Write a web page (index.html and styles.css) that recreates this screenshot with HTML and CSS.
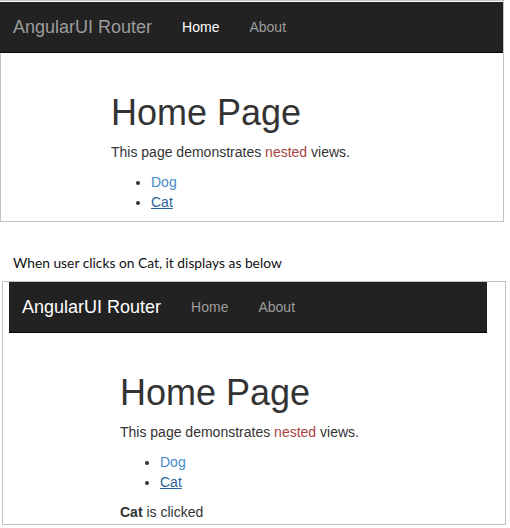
FILE: index.html
```html
<!DOCTYPE html>
<html>
<head>
<meta charset="utf-8">
<title>AngularUI Router</title>
<link rel="stylesheet" href="styles.css">
</head>
<body>
<div class="shot shot-before">
  <nav class="navbar">
    <span class="brand">AngularUI Router</span>
    <span class="nav-link active">Home</span>
    <span class="nav-link">About</span>
  </nav>
  <div class="content">
    <h1>Home Page</h1>
    <p>This page demonstrates <span class="danger">nested</span> views.</p>
    <ul>
      <li><a class="link">Dog</a></li>
      <li><a class="link focus">Cat</a></li>
    </ul>
  </div>
</div>
<p class="caption">When user clicks on Cat, it displays as below</p>
<div class="shot shot-after">
  <nav class="navbar">
    <span class="brand active">AngularUI Router</span>
    <span class="nav-link">Home</span>
    <span class="nav-link">About</span>
  </nav>
  <div class="content">
    <h1>Home Page</h1>
    <p>This page demonstrates <span class="danger">nested</span> views.</p>
    <ul>
      <li><a class="link">Dog</a></li>
      <li><a class="link focus">Cat</a></li>
    </ul>
    <p><b>Cat</b> is clicked</p>
  </div>
</div>
</body>
</html>
```
FILE: styles.css
```css
html, body {
  margin: 0;
  padding: 0;
  background: #fff;
}
body {
  width: 510px;
  height: 528px;
  overflow: hidden;
  font-family: "Liberation Sans", Arial, sans-serif;
  font-size: 14px;
  line-height: 20px;
  color: #333;
}
.shot {
  box-sizing: border-box;
  border: 1px solid #c3c3c3;
}
.shot-before {
  width: 504px;
  border-left: none;
  padding-top: 1px;
}
.shot-before .content {
  border-left: 1px solid #c3c3c3;
  height: 168px;
  padding-left: 110px;
}
.shot-after {
  width: 504px;
  height: 244px;
  margin-left: 2px;
  overflow: hidden;
}
.shot-after .navbar {
  width: 478px;
  margin-left: 6px;
}
.shot-after .content {
  height: 191px;
  padding-left: 117px;
}
.navbar {
  display: flex;
  align-items: flex-start;
  height: 50px;
  background: #222;
  border-bottom: 1px solid #080808;
}
.brand {
  padding: 15px 15px 15px 13px;
  font-size: 18px;
  line-height: 20px;
  color: #9d9d9d;
}
.nav-link {
  padding: 15px;
  font-size: 14px;
  line-height: 20px;
  color: #9d9d9d;
}
.brand.active, .nav-link.active {
  color: #fff;
}
.content {
  box-sizing: border-box;
  overflow: hidden;
  padding-top: 40px;
}
h1 {
  margin: 0 0 9px;
  font-size: 36px;
  font-weight: 500;
  line-height: 1.1;
  color: #333;
}
p {
  margin: 0 0 10px;
}
ul {
  margin: 0 0 10px;
  padding-left: 40px;
}
.danger {
  color: #a94442;
}
.link {
  color: #428bca;
  text-decoration: none;
}
.link.focus {
  color: #2a6496;
  text-decoration: underline;
}
.caption {
  margin: 0;
  padding: 32px 0 10px 13px;
  font-family: Lato, "Open Sans", sans-serif;
  font-size: 13.8px;
  line-height: 17px;
  color: #111;
}
```
